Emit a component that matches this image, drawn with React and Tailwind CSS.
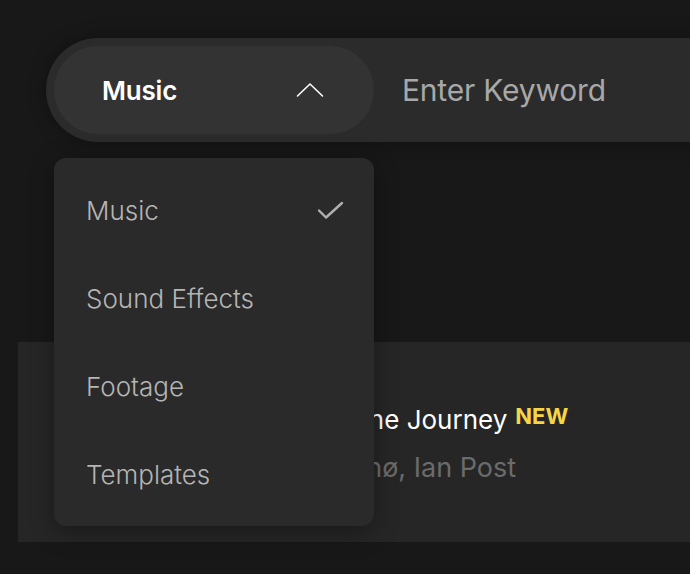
import { useState } from "react";

const categories = ["Music", "Sound Effects", "Footage", "Templates"];

function ChevronUp() {
  return (
    <svg width="28" height="16" viewBox="0 0 28 16" fill="none" className="text-white">
      <path d="M1.5 14L14 2L26.5 14" stroke="currentColor" strokeWidth="1.6" strokeLinecap="round" strokeLinejoin="round" />
    </svg>
  );
}

function Check() {
  return (
    <svg width="27" height="19" viewBox="0 0 27 19" fill="none" className="text-[#b0b0b0]">
      <path d="M2 9.5L9 16.5L25 2" stroke="currentColor" strokeWidth="2.4" strokeLinecap="round" strokeLinejoin="round" />
    </svg>
  );
}

export default function App() {
  const [selected] = useState("Music");

  return (
    <div className="relative min-h-screen overflow-hidden bg-[#181818] font-['Inter','Liberation_Sans',sans-serif]">
      {/* search bar */}
      <div className="pl-[46px] pt-[38px]">
        <div className="flex h-[104px] w-[720px] items-center rounded-l-full bg-[#2b2b2b] p-2 shadow-[0_0_18px_rgba(0,0,0,0.35)]">
          <button
            type="button"
            className="flex h-[88px] w-[320px] shrink-0 items-center justify-between rounded-full bg-[#333333] pl-12 pr-[50px]"
          >
            <span className="text-[26px] font-semibold tracking-[-0.2px] text-white">{selected}</span>
            <ChevronUp />
          </button>
          <span className="pl-7 text-[30px] font-normal tracking-[-0.2px] text-[#a8a8a8]">Enter Keyword</span>
        </div>
      </div>

      {/* result row behind the menu */}
      <div className="ml-[18px] mt-[200px] flex h-[200px] w-[720px] items-center bg-[#262626]">
        <div className="ml-[311px] flex flex-col gap-[18px] pt-[4px]">
          <div className="flex items-start gap-[8px]">
            <span className="text-[26px] leading-[30px] text-white">Alone Journey</span>
            <span className="text-[22px] font-bold leading-[22px] text-[#f7d548]">NEW</span>
          </div>
          <span className="ml-[6px] text-[27px] leading-[30px] text-[#6b6b6b]">Lunø, Ian Post</span>
        </div>
      </div>

      {/* dropdown */}
      <div className="absolute left-[54px] top-[158px] w-[320px] rounded-xl bg-[#2a2a2a] py-2 shadow-[0_6px_24px_rgba(0,0,0,0.35)]">
        {categories.map((c) => (
          <div key={c} className="flex h-[88px] items-center justify-between pl-8 pr-[30px]">
            <span className="text-[26px] font-light text-[#b5b5b5]">{c}</span>
            {c === selected && <Check />}
          </div>
        ))}
      </div>
    </div>
  );
}
